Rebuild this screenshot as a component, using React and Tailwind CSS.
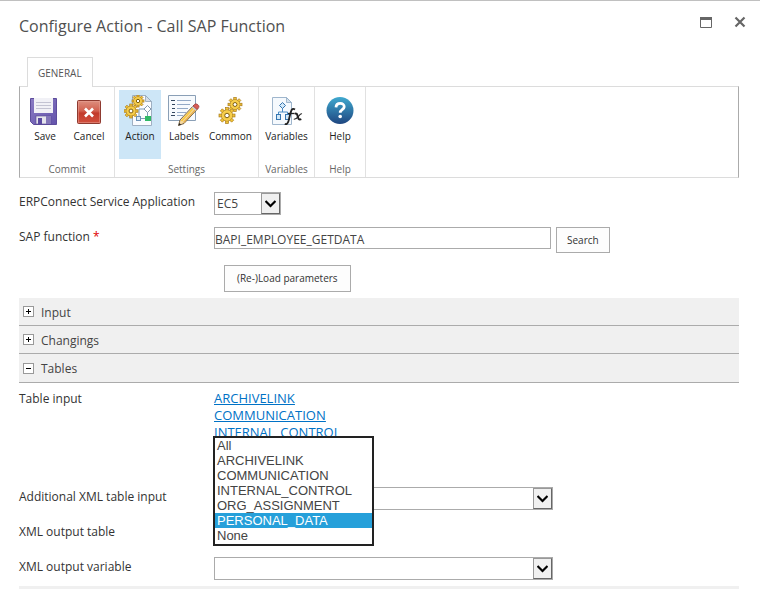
import React from "react";

const TEETH = [0, 45, 90, 135, 180, 225, 270, 315];

function Gear({ cx, cy, r }) {
  return (
    <g transform={`translate(${cx} ${cy})`}>
      {TEETH.map((a) => (
        <rect key={a} x={-r * 0.18} y={-r} width={r * 0.36} height={r * 0.5} transform={`rotate(${a})`} fill="#f3c535" stroke="#a87a1c" strokeWidth="0.7" />
      ))}
      <circle r={r * 0.7} fill="#f9d75c" stroke="#a87a1c" strokeWidth="0.7" />
      <circle r={r * 0.62} fill="#f6cd4a" />
      <circle r={r * 0.28} fill="#fff" stroke="#80600f" strokeWidth="1" />
    </g>
  );
}

function Icon({ children }) {
  return (
    <svg viewBox="0 0 32 32" className="size-8 shrink-0" aria-hidden="true">
      {children}
    </svg>
  );
}

const SaveIcon = () => (
  <Icon>
    <defs>
      <linearGradient id="floppy" x1="0" y1="0" x2="1" y2="1">
        <stop offset="0" stopColor="#8b7cc4" />
        <stop offset="1" stopColor="#6353ab" />
      </linearGradient>
    </defs>
    <path d="M1.500 3.500h26v26H4.500l-3-3z" fill="url(#floppy)" stroke="#5d4c9c" />
    <rect x="5" y="3" width="19" height="15" fill="#f1f1f6" />
    <path d="M7 7.500h15M7 10.500h15M7 13.500h15" stroke="#c3c3d2" />
    <rect x="7" y="21" width="15" height="8" fill="#e4e4ec" stroke="#54458f" strokeWidth="0.6" />
    <rect x="9" y="23" width="4" height="6" fill="#5b4aa0" />
    <rect x="17" y="21" width="5" height="8" fill="#8376b8" />
  </Icon>
);

const CancelIcon = () => (
  <Icon>
    <defs>
      <linearGradient id="cancel" x1="0" y1="0" x2="0" y2="1">
        <stop offset="0" stopColor="#dd9080" />
        <stop offset="0.45" stopColor="#d2604f" />
        <stop offset="0.55" stopColor="#c23a2b" />
        <stop offset="1" stopColor="#d2503e" />
      </linearGradient>
    </defs>
    <rect x="4.500" y="5.500" width="23" height="23" rx="1" fill="url(#cancel)" stroke="#8e3a30" />
    <rect x="5.500" y="6.500" width="21" height="21" fill="none" stroke="#e9a398" strokeOpacity="0.5" />
    <path d="M12 13.500l8 8M20 13.500l-8 8" stroke="#fff" strokeWidth="2.600" />
  </Icon>
);

const ActionIcon = () => (
  <Icon>
    <path d="M8.500 0.500h13l6 6v24h-19z" fill="#fafcff" stroke="#9fb0c2" />
    <path d="M21.500 0.500v6h6z" fill="#d5dfea" stroke="#8fa3b8" strokeWidth="0.8" />
    <path d="M17 23.500h4M23.500 21v-4M15 21v-7h5" fill="none" stroke="#7d9ab5" />
    <path d="M23.500 10.500l3.500 3.500-3.500 3.500-3.500-3.500z" fill="#fff" stroke="#8298ae" />
    <rect x="12.500" y="21.500" width="4" height="4" fill="#dcecf8" stroke="#6d93b8" />
    <rect x="21" y="21" width="6" height="5" fill="#2fb866" />
    <Gear cx={14} cy={6} r={6} />
    <Gear cx={7} cy={16} r={7} />
  </Icon>
);

const LabelsIcon = () => (
  <Icon>
    <path d="M0.500 0.500h27v25h-27z" fill="#f7fafd" stroke="#8a9fb6" />
    <path d="M3 5.500h4M4 9.500h3M4 13.500h3M4 17.500h3M3 20.500h4" stroke="#34475f" strokeWidth="1.200" />
    <path d="M9 5.500h14M9 9.500h13M9 13.500h11M9 17.500h9M9 20.500h6" stroke="#93a9c6" />
    <path d="M10.500 30.500l1.500-5.500 14-15 4 3.500-14 15z" fill="#f6d9a0" stroke="#5c4424" strokeWidth="0.8" />
    <path d="M13.500 26l12-13" stroke="#f8c83c" strokeWidth="1.600" />
    <path d="M15.500 27.500l12-13" stroke="#e8b04a" strokeWidth="1.200" />
    <path d="M24.500 11.500l4 3.500" stroke="#c9ced3" strokeWidth="2" />
    <path d="M26 10c1-1.500 2.500-1.500 4-.2s1.200 2.600 0 3.700l-1 1-4-3.500z" fill="#d65a55" stroke="#8e3230" strokeWidth="0.6" />
    <path d="M10.500 30.500l.7-2.600 2 1.800z" fill="#222" />
  </Icon>
);

const CommonIcon = () => (
  <Icon>
    <Gear cx={21} cy={9.5} r={7} />
    <Gear cx={13} cy={20.5} r={8} />
  </Icon>
);

const VariablesIcon = () => (
  <Icon>
    <path d="M1.500 2.500h14l5 5v22h-19z" fill="#f5f9fd" stroke="#9fb6cd" />
    <path d="M15.500 2.500v5h5z" fill="#d4e1ee" stroke="#8fa9c4" strokeWidth="0.8" />
    <path d="M11.500 13v4M7.500 20v-3h9v3" fill="none" stroke="#4a8cc6" />
    <path d="M11.500 7.500l3 3-3 3-3-3z" fill="#d2e8f8" stroke="#3575b0" />
    <rect x="5.500" y="19.500" width="4" height="5" fill="#d2e8f8" stroke="#3575b0" />
    <rect x="14.500" y="19.500" width="4" height="5" fill="#d2e8f8" stroke="#3575b0" />
    <path d="M24 14.500c-2-1.400-3.400-.4-4.200 2.500l-2.300 9c-.8 2.800-2 3.700-3.700 2.700" fill="none" stroke="#222" strokeWidth="1.800" />
    <path d="M17 18.500h6" stroke="#222" strokeWidth="1.300" />
    <path d="M23.500 18.800c2-1 2.600.2 3.100 2.300s1 4.200 3.700 3" fill="none" stroke="#222" strokeWidth="2" />
    <path d="M31 18.800c-2.600-.8-4.200 5.800-8.200 5.400" fill="none" stroke="#222" strokeWidth="1.100" />
  </Icon>
);

const HelpIcon = () => (
  <Icon>
    <defs>
      <linearGradient id="help" x1="0" y1="0" x2="0" y2="1">
        <stop offset="0" stopColor="#3fa9cf" />
        <stop offset="1" stopColor="#1f4680" />
      </linearGradient>
    </defs>
    <circle cx="16" cy="15.500" r="13.500" fill="url(#help)" />
    <path d="M12 12.400c.2-5.500 8.500-5 8.200-.6-.2 3-4 2.800-4 6" fill="none" stroke="#fff" strokeWidth="2.800" />
    <circle cx="16.200" cy="21.500" r="1.800" fill="#fff" />
  </Icon>
);

const RIBBON = [
  { name: "Commit", width: "w-[95px]", items: [["Save", SaveIcon], ["Cancel", CancelIcon]] },
  { name: "Settings", width: "w-[144px]", items: [["Action", ActionIcon], ["Labels", LabelsIcon], ["Common", CommonIcon]] },
  { name: "Variables", width: "w-14", items: [["Variables", VariablesIcon]] },
  { name: "Help", width: "w-[51px]", items: [["Help", HelpIcon]] },
];

function RibbonButton({ label, Glyph, active }) {
  return (
    <button
      type="button"
      aria-pressed={active}
      className={`flex h-[69px] min-w-[42px] flex-col items-center px-0.5 pt-[5px] text-[10px] leading-[18px] text-[#222] ${active ? "bg-[#cde6f7]" : ""}`}
    >
      <Glyph />
      {label}
    </button>
  );
}

function Ribbon() {
  return (
    <div className="flex h-[92px] border border-x-[#ababab] border-y-[#dcdcdc]">
      {RIBBON.map((g) => (
        <section key={g.name} aria-label={g.name} className={`flex flex-col items-center border-r border-[#e1e1e1] pt-[3px] ${g.width}`}>
          <div className="flex gap-0.5">
            {g.items.map(([label, Glyph]) => (
              <RibbonButton key={label} label={label} Glyph={Glyph} active={label === "Action"} />
            ))}
          </div>
          <div className="mt-auto text-[10px] leading-4 text-[#666]">{g.name}</div>
        </section>
      ))}
    </div>
  );
}

function Row({ label, id, required, children }) {
  return (
    <div className="flex min-h-[23px] items-start">
      <label htmlFor={id} className="w-[195px] shrink-0 text-[12px] leading-5 text-[#333]">
        {label}
        {required && <span className="text-[#e00000]"> *</span>}
      </label>
      {children}
    </div>
  );
}

function Select({ id, width, options }) {
  return (
    <div className={`relative h-[23px] ${width}`}>
      <select id={id} className="block size-full appearance-none border border-[#ababab] bg-white pl-[2px] text-[12px] text-[#444]">
        {options.map((o) => (
          <option key={o}>{o}</option>
        ))}
      </select>
      <span className="pointer-events-none absolute inset-y-px right-px flex w-[19px] items-center justify-center border border-t-[#999] border-r-[#666] border-b-[#666] border-l-[#999] bg-[#f0f0f0]">
        <svg viewBox="0 0 11 8" className="h-2 w-[11px]" aria-hidden="true">
          <path d="M0.500 1l5 5 5-5" fill="none" stroke="#000" strokeWidth="2.200" />
        </svg>
      </span>
    </div>
  );
}

function SectionBar({ title, open }) {
  return (
    <button
      type="button"
      aria-expanded={open}
      className={`flex w-full items-center gap-[7px] border-b border-[#ababab] bg-[#f0f0f0] pl-1 text-[12px] text-[#444] ${open ? "h-[29px]" : "h-7"}`}
    >
      <svg viewBox="0 0 11 11" className="size-[11px]" aria-hidden="true">
        <rect x="0.500" y="0.500" width="10" height="10" fill="#fff" stroke="#999" />
        <path d={open ? "M3 5.500h5" : "M3 5.500h5M5.500 3v5"} stroke="#000" />
      </svg>
      <span className="pt-0.5">{title}</span>
    </button>
  );
}

const TABLES = ["All", "ARCHIVELINK", "COMMUNICATION", "INTERNAL_CONTROL", "ORG_ASSIGNMENT", "PERSONAL_DATA", "None"];

export default function App() {
  return (
    <div className="border-t border-[#c0c0c0] bg-white pr-[21px] pl-[19px] font-['Open_Sans','Noto_Sans',sans-serif]">
      <header className="flex h-14 items-start justify-between pt-[13px]">
        <h1 className="text-[16px] leading-6 text-[#505050]">Configure Action - Call SAP Function</h1>
        <div className="-mr-[9px] flex gap-[18px]">
          <button type="button" aria-label="Maximize" className="flex size-4 items-center justify-center">
            <svg viewBox="0 0 12 11" className="h-[11px] w-3" aria-hidden="true">
              <path d="M0.500 0.500h11v10h-11z" fill="#fff" stroke="#666" />
              <path d="M0 1.500h12" stroke="#666" strokeWidth="3" />
            </svg>
          </button>
          <button type="button" aria-label="Close" className="flex size-4 items-center justify-center">
            <svg viewBox="0 0 12 12" className="size-3" aria-hidden="true">
              <path d="M1.500 1.500l9 9M10.500 1.500l-9 9" stroke="#666" strokeWidth="2.200" />
            </svg>
          </button>
        </div>
      </header>

      <div role="tablist" className="flex pl-2">
        <button type="button" role="tab" aria-selected="true" className="relative -mb-px h-[30px] border border-b-0 border-[#dcdcdc] bg-white px-[10px] pt-0.5 text-[10px] text-[#555]">
          GENERAL
        </button>
      </div>
      <Ribbon />

      <main>
        <div className="flex flex-col gap-3 pt-[14px] pb-[6px]">
          <Row label="ERPConnect Service Application" id="service">
            <Select id="service" width="w-[67px]" options={["EC5"]} />
          </Row>
          <Row label="SAP function" id="func" required>
            <div className="flex items-start gap-[5px]">
              <input id="func" defaultValue="BAPI_EMPLOYEE_GETDATA" className="h-[22px] w-[337px] border border-[#ababab] pt-[3px] text-[12px] leading-4 text-[#444]" />
              <button type="button" className="h-[26px] border border-[#ababab] bg-[#fdfdfd] px-[10px] text-[10px] text-[#333]">
                Search
              </button>
            </div>
          </Row>
          <div className="flex pl-[205px]">
            <button type="button" className="h-[27px] border border-[#ababab] bg-[#fdfdfd] px-3 text-[10px] text-[#333]">
              (Re-)Load parameters
            </button>
          </div>
        </div>

        <SectionBar title="Input" open={false} />
        <SectionBar title="Changings" open={false} />
        <SectionBar title="Tables" open />

        <div className="flex flex-col gap-3 border-b-[3px] border-[#f0f0f0] pt-[7px] pb-[6px]">
          <div className="flex min-h-[85px] items-start">
            <div className="w-[195px] text-[12px] leading-[18px] text-[#333]">Table input</div>
            <div className="flex flex-col text-[13px] leading-[17px] text-[#0072c6] underline">
              <a href="#archivelink">ARCHIVELINK</a>
              <a href="#communication">COMMUNICATION</a>
              <a href="#internal-control">INTERNAL_CONTROL</a>
            </div>
          </div>
          <Row label="Additional XML table input" id="extra">
            <Select id="extra" width="w-[339px]" options={[""]} />
          </Row>
          <Row label="XML output table" id="table">
            <div className="relative h-[23px] w-[159px]">
              <select
                id="table"
                size={7}
                defaultValue="PERSONAL_DATA"
                className="absolute -bottom-px -left-px h-[110px] w-[161px] appearance-none overflow-hidden border-2 border-[#222] bg-white p-0 font-['Liberation_Sans',Arial,sans-serif] text-[13px] leading-[15px] text-[#444]"
              >
                {TABLES.map((t) => (
                  <option key={t} className="h-[15px] min-h-0 p-0 pl-[2px] leading-[15px] checked:bg-[#26a0da] checked:text-white">
                    {t}
                  </option>
                ))}
              </select>
            </div>
          </Row>
          <Row label="XML output variable" id="variable">
            <Select id="variable" width="w-[339px]" options={[""]} />
          </Row>
        </div>
      </main>
    </div>
  );
}
